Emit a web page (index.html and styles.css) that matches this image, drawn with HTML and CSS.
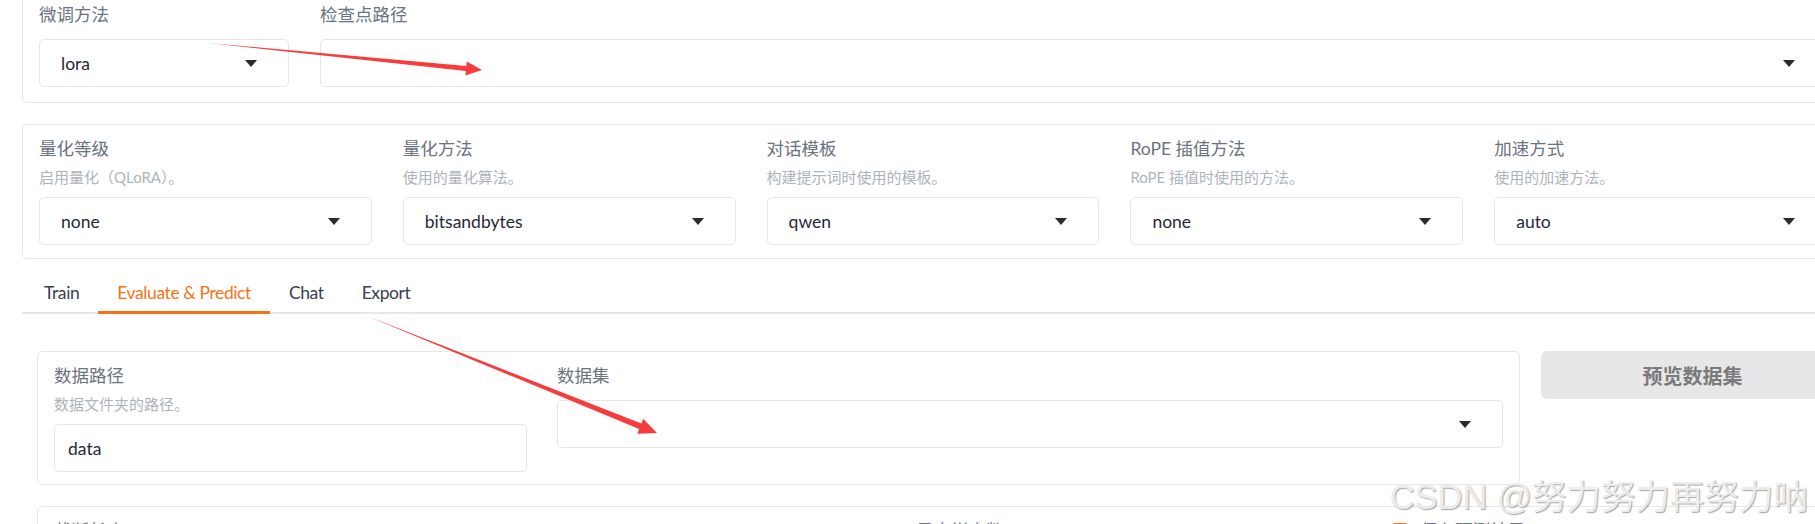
FILE: index.html
```html
<!DOCTYPE html>
<html lang="zh-CN">
<head>
    <meta charset="UTF-8">
    <title>LLaMA Board</title>
    <link rel="stylesheet" href="styles.css">
</head>
<body>
    <div class="page">
        <div class="card card-top">
            <div class="field field-method">
                <span class="label">微调方法</span>
                <div class="select"><span>lora</span><svg class="caret" width="12" height="7" viewBox="0 0 12 7"><path d="M0 0h12L6 7z"/></svg></div>
            </div>
            <div class="field field-grow">
                <span class="label">检查点路径</span>
                <div class="select"><span></span><svg class="caret" width="12" height="7" viewBox="0 0 12 7"><path d="M0 0h12L6 7z"/></svg></div>
            </div>
        </div>

        <div class="card card-mid grid5">
            <div class="field">
                <span class="label">量化等级</span>
                <span class="info">启用量化（QLoRA）。</span>
                <div class="select"><span>none</span><svg class="caret" width="12" height="7" viewBox="0 0 12 7"><path d="M0 0h12L6 7z"/></svg></div>
            </div>
            <div class="field">
                <span class="label">量化方法</span>
                <span class="info">使用的量化算法。</span>
                <div class="select"><span>bitsandbytes</span><svg class="caret" width="12" height="7" viewBox="0 0 12 7"><path d="M0 0h12L6 7z"/></svg></div>
            </div>
            <div class="field">
                <span class="label">对话模板</span>
                <span class="info">构建提示词时使用的模板。</span>
                <div class="select"><span>qwen</span><svg class="caret" width="12" height="7" viewBox="0 0 12 7"><path d="M0 0h12L6 7z"/></svg></div>
            </div>
            <div class="field">
                <span class="label">RoPE 插值方法</span>
                <span class="info">RoPE 插值时使用的方法。</span>
                <div class="select"><span>none</span><svg class="caret" width="12" height="7" viewBox="0 0 12 7"><path d="M0 0h12L6 7z"/></svg></div>
            </div>
            <div class="field">
                <span class="label">加速方式</span>
                <span class="info">使用的加速方法。</span>
                <div class="select"><span>auto</span><svg class="caret" width="12" height="7" viewBox="0 0 12 7"><path d="M0 0h12L6 7z"/></svg></div>
            </div>
        </div>

        <div class="tabs">
            <div class="tab-nav">
                <button class="tab">Train</button>
                <button class="tab active">Evaluate &amp; Predict</button>
                <button class="tab">Chat</button>
                <button class="tab">Export</button>
            </div>
            <div class="tab-body">
                <div class="data-row">
                    <div class="card grid-data">
                        <div class="field">
                            <span class="label">数据路径</span>
                            <span class="info">数据文件夹的路径。</span>
                            <div class="textbox">data</div>
                        </div>
                        <div class="field">
                            <span class="label">数据集</span>
                            <div class="select"><span></span><svg class="caret" width="12" height="7" viewBox="0 0 12 7"><path d="M0 0h12L6 7z"/></svg></div>
                        </div>
                    </div>
                    <button class="btn-preview">预览数据集</button>
                </div>

                <div class="card card-params">
                    <span class="label p1">截断长度</span>
                    <span class="label p2">1024</span>
                    <span class="label p3">最大样本数</span>
                    <span class="check"></span>
                    <span class="label p4">保存预测结果</span>
                </div>
            </div>
        </div>
    </div>

    <!-- red annotation arrows from the screenshot -->
    <svg class="annot" width="1815" height="524" viewBox="0 0 1815 524">
        <polygon points="208,43 466.3,65.9 466.8,61.4 482,70 465.4,75.4 465.9,70.9"/>
        <polygon points="367,316 641.4,423.5 643.3,418.9 657,433 637.3,433.7 639.2,429.1"/>
    </svg>

    <div class="watermark">CSDN @努力努力再努力呐</div>
</body>
</html>
```

FILE: styles.css
```css
html, body {
    margin: 0;
    height: 524px;
    overflow: hidden;
}
body {
    position: relative;
    font-family: Lato, "Noto Sans CJK SC", sans-serif;
    font-size: 17.5px;
    color: #1f2937;
    background: #fff;
}
.page {
    width: 1822px;
    margin: -10px 0 0 22px;
}
.card {
    border: 1px solid #e5e7eb;
    border-radius: 5px;
    padding: 13px 16px 13px;
    background: #fff;
}
.card-top {
    display: flex;
    gap: 31px;
    padding-bottom: 15px;
}
.field-method {
    width: 250px;
}
.field-grow {
    flex: 1;
}
.card-mid {
    margin-top: 21px;
}
.grid5 {
    display: grid;
    grid-template-columns: repeat(5, 1fr);
    column-gap: 31px;
}
.label {
    display: block;
    line-height: 22px;
    color: #6b7280;
}
.info {
    display: block;
    margin-top: 7px;
    line-height: 20px;
    font-size: 15px;
    color: #aeb3ba;
}
.select, .textbox {
    box-sizing: border-box;
    height: 48px;
    margin-top: 13px;
    border: 1px solid #e5e7eb;
    border-radius: 5px;
    display: flex;
    align-items: center;
    background: #fff;
}
.select {
    justify-content: space-between;
    padding: 0 31px 0 21px;
}
.info + .select, .info + .textbox {
    margin-top: 10px;
}
.textbox {
    padding: 0 13px;
}
.caret {
    fill: #2b2b2b;
}

/* tabs */
.tabs {
    margin-top: 13px;
}
.tab-nav {
    display: flex;
    border-bottom: 2px solid #e5e7eb;
    padding-left: 3px;
}
.tab {
    font: inherit;
    letter-spacing: -0.4px;
    line-height: 22px;
    background: none;
    border: none;
    border-bottom: 3px solid transparent;
    margin-bottom: -2px;
    padding: 10px 19px 7px;
    color: #374151;
}
.tab.active {
    color: #f97316;
    border-bottom-color: #f97316;
}
.tab-body {
    padding: 37px 0 0 15px;
}
.data-row {
    display: grid;
    grid-template-columns: 1483px 1fr;
    gap: 21px;
    align-items: start;
}
.grid-data {
    display: grid;
    grid-template-columns: 1fr 2fr;
    column-gap: 30px;
    padding-bottom: 12px;
}
.btn-preview {
    height: 48px;
    border: none;
    border-radius: 6px;
    background: #e7e7e9;
    color: #7a7a7a;
    font-family: Lato, "Noto Sans CJK SC", sans-serif;
    font-size: 20px;
    font-weight: 700;
}
.card-params {
    margin-top: 21px;
    padding-top: 13px;
    display: flex;
    align-items: flex-start;
    height: 60px;
}
.card-params .p1 { width: 462px; }
.card-params .p2 { width: 400px; }
.card-params .p3 { width: 476px; }
.check {
    width: 16px;
    height: 16px;
    margin-top: 3px;
    margin-right: 12px;
    border-radius: 3px;
    background: #f97316;
}

/* overlays */
.annot {
    position: absolute;
    top: 0;
    left: 0;
    fill: #f83b3b;
    pointer-events: none;
}
.watermark {
    position: absolute;
    right: 7px;
    top: 477px;
    font-family: "Liberation Sans", "Noto Sans CJK SC", sans-serif;
    font-size: 34.5px;
    line-height: 40px;
    color: #ececec;
    text-shadow: 1px 1px 1px rgba(0, 0, 0, 0.35);
    white-space: nowrap;
}
```
